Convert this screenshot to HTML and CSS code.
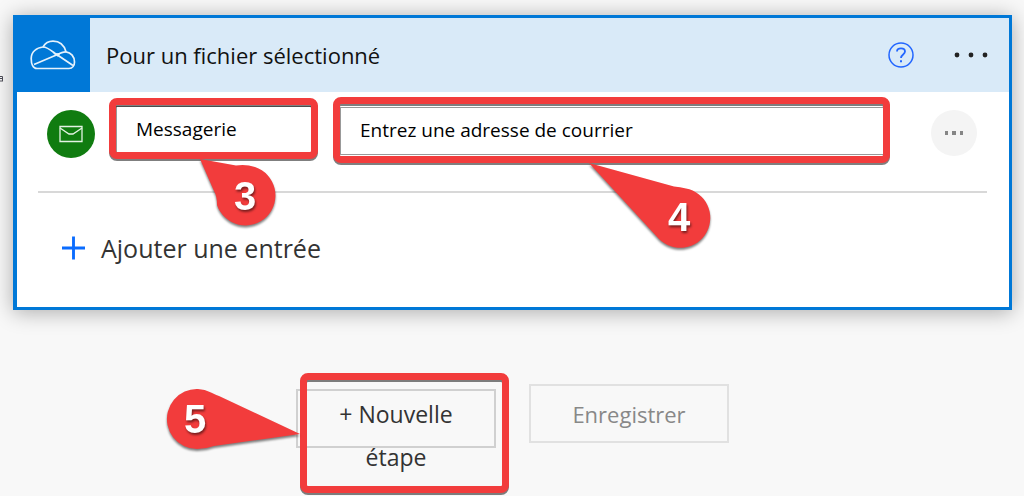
FILE: index.html
```html
<!DOCTYPE html>
<html lang="fr">
<head>
<meta charset="utf-8">
<meta name="viewport" content="width=device-width, initial-scale=1">
<title>Pour un fichier sélectionné</title>
<link rel="stylesheet" href="styles.css">
</head>
<body>
<svg class="edge-mark" viewBox="0 0 4 8" aria-hidden="true"><path d="M0 1.5H2.5V6M0 3.5H2.5M0 6H3" fill="none" stroke="#4a4a55"/></svg>
<main class="page">
  <section class="card">
    <header class="card-header">
      <div class="connector">
        <svg class="cloud" viewBox="0 0 46 30" fill="none" stroke="#e6f2fc" stroke-width="1.7" stroke-linejoin="round" aria-hidden="true">
          <path d="M7 28.500H39C42.500 28.500 44.500 25.500 44.500 22C44.500 16.500 41 12.500 36 11.800C34 5 29.500 1.200 23 1.200C18.500 1.200 15 3.500 13 7C6.500 7.500 1.200 12 1.200 18.500C1.200 24 3 28.500 7 28.500Z"/>
          <path d="M13 7C17 7 20 9.500 24.500 13L43 25.500M4 24.500L24 16C28 14.200 32 11.500 36 11.800"/>
          <path d="M23 13.500L31 13L28 16.800Z" fill="#e6f2fc" stroke="none"/>
        </svg>
      </div>
      <h1 class="card-title">Pour un fichier sélectionné</h1>
      <button class="icon-button" type="button" aria-label="Aide">
        <svg class="help" viewBox="0 0 26 26" fill="none" stroke="#2266ff" aria-hidden="true">
          <circle cx="13" cy="13" r="12" stroke-width="1.500"/>
          <path d="M9 9.500C9 7.300 10.800 6.300 13 6.300C15.400 6.300 17 7.600 17 9.600C17 12.500 13 12.500 13 16" stroke-width="1.800"/>
          <path d="M13 18.200V20.200" stroke-width="2"/>
        </svg>
      </button>
      <button class="icon-button" type="button" aria-label="Plus d'options">
        <svg class="dots" viewBox="0 0 36 6" fill="#222" aria-hidden="true"><circle cx="4" cy="3" r="2.400"/><circle cx="18" cy="3" r="2.400"/><circle cx="32" cy="3" r="2.400"/></svg>
      </button>
    </header>

    <div class="card-body">
      <div class="entry">
        <div class="entry-type">
          <svg class="mail" viewBox="0 0 24 18" fill="none" stroke="#e4f3e4" stroke-width="1.300" aria-hidden="true"><path d="M1 1.500H23V16.500H1Z"/><path d="M1 3L10 9H14L23 3"/></svg>
        </div>
        <div class="field field-name">
          <input class="field-input" type="text" value="Messagerie" aria-label="Nom de l'entrée">
          <span class="frame"></span>
          <svg class="callout callout-3" viewBox="196 156 84 76" aria-label="3">
            <path d="M200 159L236 165.500Q246 164 255 167A30 30 0 1 1 217 205Q217 196 214 191Z"/>
            <text x="245" y="210">3</text>
          </svg>
        </div>
        <div class="field field-value">
          <input class="field-input" type="text" value="Entrez une adresse de courrier" aria-label="Valeur de l'entrée">
          <span class="frame"></span>
          <svg class="callout callout-4" viewBox="584 160 132 94" aria-label="4">
            <path d="M589 163L674 186.500Q680 187 686 188.400A30 30 0 1 1 659 239Z"/>
            <text x="679" y="231">4</text>
          </svg>
        </div>
        <button class="entry-menu" type="button" aria-label="Menu de l'entrée">
          <svg class="small-dots" viewBox="0 0 20 4" fill="#858585" aria-hidden="true"><path d="M1 0h3v4H1zM8 0h4v4H8zM16 0h3v4H16z"/></svg>
        </button>
      </div>
      <button class="add-entry" type="button">
        <svg class="plus" viewBox="0 0 24 24" aria-hidden="true"><path d="M12 0V24M0 12H24" stroke="#0a6cff" stroke-width="3"/></svg>
        Ajouter une entrée
      </button>
    </div>
  </section>

  <div class="actions">
    <div class="step">
      <button class="action action-new" type="button">+ Nouvelle<br>étape</button>
      <span class="frame"></span>
      <svg class="callout callout-5" viewBox="162 384 142 72" aria-label="5">
        <path d="M300 434L219 396Q216 395 211 392.500A30 30 0 1 0 197 449Q206 449 214 446Z"/>
        <text x="195" y="433">5</text>
      </svg>
    </div>
    <button class="action" type="button" disabled>Enregistrer</button>
  </div>
</main>
</body>
</html>
```
FILE: styles.css
```css
* {
  box-sizing: border-box;
}

body {
  margin: 0;
  background: #f8f8f8;
  color: #333;
  font-family: "Open Sans", "Noto Sans", sans-serif;
}

button,
input {
  font: inherit;
  color: inherit;
}

button {
  padding: 0;
  border: 0;
  background: none;
}

svg {
  display: block;
  flex: none;
}

.page {
  min-height: 100vh;
  padding: 15px 12px 0 13px;
}

.edge-mark {
  position: absolute;
  left: 0;
  top: 75px;
  width: 4px;
  height: 8px;
}

.card {
  border: 3px solid #0078d7;
  border-left-width: 4px;
  background: #fff;
  box-shadow: 0 2px 20px rgba(0, 0, 0, 0.32);
}

.card-header {
  display: flex;
  align-items: center;
  padding-right: 20px;
  background: #d9eaf8;
}

.connector {
  display: flex;
  align-items: center;
  width: 73px;
  height: 74px;
  padding-left: 13px;
  background: #0078d7;
}

.cloud {
  width: 46px;
  height: 30px;
}

.card-title {
  flex: 1;
  margin: 0 0 0 16px;
  font-size: 22px;
  font-weight: 400;
  line-height: 30px;
  color: #111;
}

.icon-button + .icon-button {
  margin-left: 39px;
}

.help {
  width: 26px;
  height: 26px;
}

.dots {
  width: 36px;
  height: 6px;
}

.card-body {
  padding: 14px 22px 41px 21px;
}

.entry {
  display: flex;
  align-items: flex-start;
  padding: 0 10px 33px 9px;
  border-bottom: 2px solid #d8d8d8;
}

.entry-type {
  display: flex;
  align-items: center;
  justify-content: center;
  width: 48px;
  height: 48px;
  margin-top: 4px;
  border-radius: 50%;
  background: #107c10;
}

.mail {
  width: 24px;
  height: 18px;
}

.field {
  position: relative;
  height: 48px;
}

.field-name {
  flex: 0 0 196px;
  margin-left: 21px;
}

.field-value {
  flex: 1;
  margin: 1px 47px 0 28px;
}

.field-input {
  display: block;
  width: 100%;
  height: 48px;
  padding: 0 19px 2px;
  border: 1px solid #999;
  background: #fff;
  color: #000;
  font-size: 19px;
}

.frame {
  position: absolute;
  inset: -8px -6px -5px -7px;
  border: 7px solid #f23c3c;
  border-radius: 8px;
  filter: drop-shadow(0 2px 0 rgba(0, 0, 0, 0.5));
  pointer-events: none;
}

.field-value .frame {
  inset: -10px -6px -8px -7px;
}

.callout {
  position: absolute;
  z-index: 1;
  fill: #f23c3c;
  filter: drop-shadow(0 2px 1px rgba(0, 0, 0, 0.5));
  pointer-events: none;
}

.callout text {
  fill: #fff;
  font-family: "Liberation Sans", Arial, sans-serif;
  font-size: 40px;
  font-weight: 700;
  text-anchor: middle;
  filter: drop-shadow(1px 2px 1px rgba(0, 0, 0, 0.5));
}

.callout-3 {
  left: 80px;
  top: 50px;
  width: 84px;
  height: 76px;
}

.callout-4 {
  left: 244px;
  top: 53px;
  width: 132px;
  height: 94px;
}

.callout-5 {
  right: 192px;
  top: -5px;
  width: 142px;
  height: 72px;
}

.entry-menu {
  display: flex;
  align-items: center;
  justify-content: center;
  width: 46px;
  height: 46px;
  margin-top: 4px;
  border-radius: 50%;
  background: #f4f4f4;
}

.small-dots {
  width: 20px;
  height: 4px;
}

.add-entry {
  display: flex;
  align-items: center;
  gap: 16px;
  margin: 37px 0 0 24px;
  font-size: 25px;
  line-height: 36px;
}

.plus {
  width: 23px;
  height: 24px;
}

.actions {
  display: flex;
  justify-content: center;
  align-items: flex-start;
  gap: 33px;
  padding-top: 74px;
}

.step {
  position: relative;
  margin-top: 5px;
}

.step .frame {
  inset: -16px -13px -45px 4px;
}

.action {
  display: flex;
  justify-content: center;
  width: 200px;
  height: 59px;
  padding-top: 7px;
  border: 2px solid #d0d0d0;
  font-size: 22px;
  line-height: 43px;
}

.action-new {
  display: block;
  height: auto;
  max-height: 59px;
  padding: 2px 0 0;
  font-size: 23px;
  text-align: center;
}

.action:disabled {
  border-color: #e1e1e1;
  color: #888;
}
```
